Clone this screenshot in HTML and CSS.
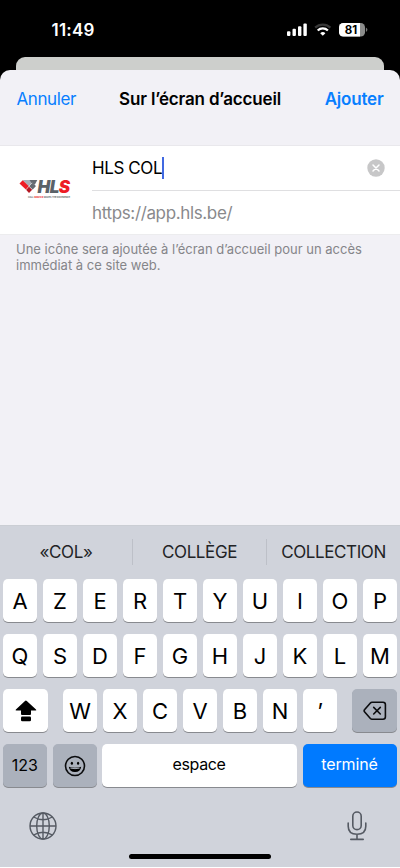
FILE: index.html
```html
<!DOCTYPE html>
<html lang="fr">
<head>
<meta charset="utf-8">
<meta name="viewport" content="width=device-width, initial-scale=1">
<title>Sur l’écran d’accueil</title>
<link rel="stylesheet" href="styles.css">
</head>
<body>
<div class="phone">
  <div class="status">
    <span class="time">11:49</span>
    <svg class="indicators" width="82" height="16" viewBox="0 0 82 16">
      <g fill="#fff">
        <rect x="1" y="9.2" width="3.4" height="4.8" rx="1"/>
        <rect x="6.5" y="6.8" width="3.4" height="7.2" rx="1"/>
        <rect x="12" y="4.2" width="3.4" height="9.8" rx="1"/>
        <rect x="17.4" y="1.4" width="3.4" height="12.6" rx="1"/>
      </g>
      <g fill="none" stroke-width="2.3">
        <path d="M29.2 5.6a11 11 0 0 1 15.2 0" stroke="#383838"/>
        <path d="M31.7 8.5a7.4 7.4 0 0 1 10.2 0" stroke="#fff"/>
      </g>
      <path d="M34.2 11.2a3.8 3.8 0 0 1 5.2 0L36.8 13.8z" fill="#fff"/>
      <rect x="53" y="1" width="26" height="13.6" rx="4.3" fill="#8b8c8b"/>
      <path d="M57.3 1H74v13.6H57.3A4.3 4.3 0 0 1 53 10.3v-5A4.3 4.3 0 0 1 57.3 1z" fill="#fff"/>
      <path d="M79.9 5.5q3 2.2 0 4.6z" fill="#777"/>
      <text x="65" y="12" class="battery-level">81</text>
    </svg>
  </div>
  <div class="backdrop-card"></div>
  <main class="sheet">
    <header class="bar">
      <span class="cancel">Annuler</span>
      <h1>Sur l’écran d’accueil</h1>
      <span class="add">Ajouter</span>
    </header>
    <section class="group">
      <div class="site-icon">
        <div class="logo">
          <svg width="20" height="15" viewBox="0 0 20 15">
            <path d="M3.700 1h8.200l2 2.300-4.200 4z" fill="#a6afb7"/>
            <path d="M10.500 1h7.800l-2.500 4.700-3.300-1.700z" fill="#646b72"/>
            <path d="M.5 4.500L3.700 1.300l6.200 6L7.100 10.700z" fill="#ed1c24"/>
            <path d="M7.100 10.700l2.800-3.400 3.300 3.400-3.200 3.300z" fill="#b41822"/>
            <path d="M9.900 7.300l3.200-3.500 3.900 3.300-3.400 3.600z" fill="#646b72"/>
            <path d="M7.100 10.700l2.800-3.400 3.700 3.400M9.900 7.300l3.200-3.500" fill="none" stroke="#fff" stroke-width=".5"/>
          </svg>
          <div class="logo-name">HL<em>S</em></div>
        </div>
        <div class="logo-tag">CALL <em>SERVICE</em> MAKES THE DIFFERENCE</div>
      </div>
      <div class="fields">
        <div class="field name"><span class="value">HLS COL</span><i class="caret"></i>
          <svg class="clear" width="18" height="18" viewBox="0 0 18 18"><circle cx="9" cy="9" r="8.7" fill="#c7c7c8"/><path d="M6 6l6 6M12 6l-6 6" stroke="#fff" stroke-width="1.5" stroke-linecap="round"/></svg>
        </div>
        <div class="field url">https://app.hls.be/</div>
      </div>
    </section>
    <p class="note">Une icône sera ajoutée à l’écran d’accueil pour un accès<br>immédiat à ce site web.</p>
  </main>
  <section class="keyboard">
    <div class="suggestions"><span>«COL»</span><i></i><span>COLLÈGE</span><i></i><span>COLLECTION</span></div>
    <div class="row"><b>A</b><b>Z</b><b>E</b><b>R</b><b>T</b><b>Y</b><b>U</b><b>I</b><b>O</b><b>P</b></div>
    <div class="row"><b>Q</b><b>S</b><b>D</b><b>F</b><b>G</b><b>H</b><b>J</b><b>K</b><b>L</b><b>M</b></div>
    <div class="row row-three">
      <b class="side"><svg width="24" height="24" viewBox="0 0 24 24"><path d="M11.9 1.500q.5 0 .9.4l9.200 8.600q.9.9-.4 1H17v3.400q0 1-1 1H8q-1 0-1-1v-3.400H2.400q-1.500-.1-.5-1L11 1.900q.4-.4.9-.4z"/><rect x="7" y="17.500" width="10" height="4.700" rx="1.300"/></svg></b>
      <div class="letters"><b>W</b><b>X</b><b>C</b><b>V</b><b>B</b><b>N</b><b>’</b></div>
      <b class="side grey"><svg width="24" height="22" viewBox="0 0 24 22" fill="none" stroke="#0b0c0e" stroke-width="1.600" stroke-linecap="round" stroke-linejoin="round"><path d="M9 2.200h11q2.400 0 2.400 2.400v12.200q0 2.400-2.400 2.400H9q-.9 0-1.600-.7L1.700 12q-1.200-1.200 0-2.400L7.400 2.900Q8 2.200 9 2.200zM10.700 7.400l6.600 6.600M17.300 7.400l-6.600 6.600"/></svg></b>
    </div>
    <div class="row row-four">
      <b class="grey numbers">123</b>
      <b class="grey emoji"><svg width="22" height="22" viewBox="0 0 22 22"><circle cx="11" cy="11" r="9.500" fill="none" stroke="#0b0c0e" stroke-width="1.600"/><ellipse cx="7.900" cy="8.200" rx="1.150" ry="1.500"/><ellipse cx="14.100" cy="8.200" rx="1.150" ry="1.500"/><path d="M4.800 11.800q6.200 1.800 12.400 0-.8 5.300-6.200 5.300t-6.200-5.300z"/><path d="M6.400 13.100q4.600 1.100 9.200 0" fill="none" stroke="#aab1bd" stroke-width="1"/></svg></b>
      <b class="space">espace</b>
      <b class="done">terminé</b>
    </div>
    <div class="footer">
      <svg width="30" height="30" viewBox="0 0 30 30" fill="none" stroke="#555a63" stroke-width="1.400"><circle cx="15" cy="15" r="13"/><ellipse cx="15" cy="15" rx="6.300" ry="13"/><path d="M15 2v26M2 15h26M5.600 6q9.400 5.400 18.800 0M5.600 24q9.400-5.400 18.800 0"/></svg>
      <svg width="22" height="32" viewBox="0 0 22 32" fill="none" stroke="#555a63" stroke-width="1.600" stroke-linecap="round"><rect x="6.800" y="2" width="8.400" height="17.600" rx="4.200"/><path d="M2.200 13v3.200q0 8 8.800 8t8.800-8V13M11 24.200v5M4.800 29.400h12.400"/></svg>
    </div>
    <div class="home"></div>
  </section>
</div>
</body>
</html>
```
FILE: styles.css
```css
* { box-sizing: border-box; }
body { margin: 0; background: #fff; font-family: Inter, "Liberation Sans", sans-serif; font-size: 17px; color: #000; }
.phone { width: 400px; height: 867px; background: #000; display: flex; flex-direction: column; overflow: hidden; }
svg { display: block; flex: none; }
.status { height: 57px; flex: none; display: flex; justify-content: space-between; padding: 20px 32px 0 51.500px; color: #fff; }
.time { font-size: 17px; line-height: 20px; font-weight: 600; letter-spacing: .2px; }
.indicators { margin: 2px 0 0; }
.battery-level { font-size: 11.500px; font-weight: 700; text-anchor: middle; }
.backdrop-card { height: 13px; flex: none; margin: 0 16px; border-radius: 9px 9px 0 0; background: #cdcfcc; }
.sheet { height: 455px; flex: none; background: #f2f1f6; border-radius: 10px 10px 0 0; }
.bar { height: 75px; display: grid; grid-template-columns: 80px 1fr 80px; padding: 18px 16.500px 0; line-height: 22px; letter-spacing: -.4px; }
h1 { margin: 0; font-size: 17px; line-height: 22px; font-weight: 600; text-align: center; letter-spacing: -.17px; white-space: nowrap; }
.cancel { color: #087fff; }
.add { color: #087fff; font-weight: 600; text-align: right; letter-spacing: -.2px; }
.group { height: 90px; display: flex; background: #fff; border-top: 1px solid #e9e8ec; border-bottom: 1px solid #ececee; }
.site-icon { width: 92px; padding: 33px 0 0 18.500px; }
.logo { height: 17px; display: flex; }
.logo-name { margin-left: -1px; color: #5a6268; font-size: 17px; line-height: 16px; font-weight: 900; font-style: italic; letter-spacing: -.55px; white-space: nowrap; }
.logo-name em { color: #ed1c24; }
.logo-tag { margin-left: 9.500px; font-size: 2.300px; line-height: 3px; font-weight: 500; letter-spacing: -.09px; color: #444; white-space: nowrap; }
.logo-tag em { font-style: normal; font-weight: 700; color: #ed1c24; }
.fields { flex: 1; }
.field { height: 44px; display: flex; align-items: center; letter-spacing: -.4px; }
.name { height: 45px; border-bottom: 1px solid #dfdfe1; }
.caret { width: 2px; height: 22px; background: #4169e1; }
.clear { margin: 0 15px 0 auto; }
.url { color: #89898c; letter-spacing: -.36px; }
.note { margin: 6px 16px; color: #858589; font-size: 13px; line-height: 16px; white-space: nowrap; }
.keyboard { height: 342px; flex: none; background: #d0d3db; padding: 0 3px; display: flex; flex-direction: column; border-top: 1px solid #cbced4; }
.suggestions { height: 53px; flex: none; margin: 0 -3px; display: grid; grid-template-columns: 132px 1px 133px 1px 133px; align-items: center; text-align: center; color: #222326; letter-spacing: -.4px; padding-bottom: 2px; }
.suggestions i { height: 26px; background: #bdc0c8; }
.row { height: 43px; flex: none; margin-bottom: 12px; display: flex; gap: 6px; }
.row b { width: 34px; height: 43px; display: flex; align-items: center; justify-content: center; border-radius: 5px; background: #fff; box-shadow: 0 1px 0 #888a8f; font-size: 22px; font-weight: 400; }
.row .grey { background: #abb1bc; }
.row-three { justify-content: space-between; }
.row-three .side { width: 45px; }
.letters { display: flex; gap: 6px; }
.row-four b { font-size: 16px; }
.row-four .numbers { width: 43.500px; padding-bottom: 1px; }
.row-four .emoji { width: 44px; }
.row-four .space { width: 195px; margin-left: -1px; padding-bottom: 3px; letter-spacing: -.35px; }
.row-four .done { width: 94px; background: #007aff; color: #fff; padding-bottom: 3px; letter-spacing: -.15px; }
.footer { height: 52px; flex: none; display: flex; justify-content: space-between; align-items: center; padding: 2px 29px 0 25px; }
.home { width: 142px; height: 5px; margin: 3px auto 0; border-radius: 3px; background: #000; }
```
